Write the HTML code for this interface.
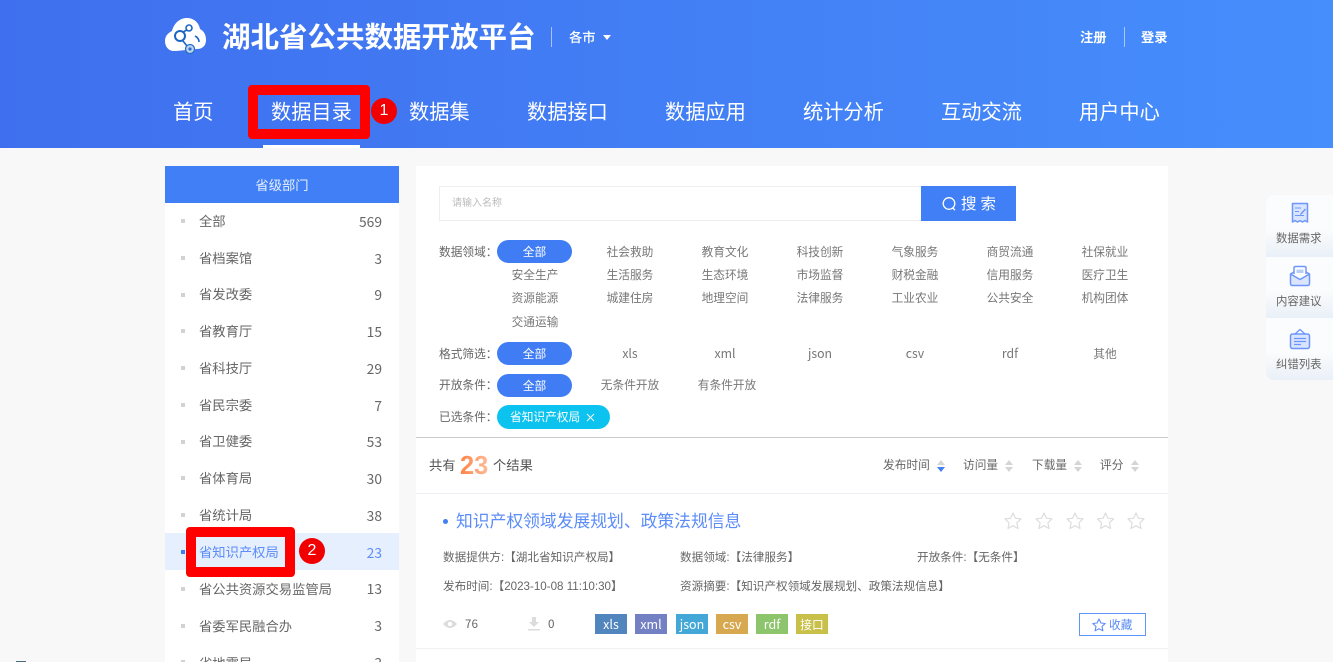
<!DOCTYPE html>
<html lang="zh">
<head>
<meta charset="utf-8">
<title>湖北省公共数据开放平台</title>
<style>
html{margin:0;padding:0;width:1333px;height:662px;overflow:hidden;background:#f8f8f8}
body{margin:0;padding:0;position:relative;width:1333px;height:662px;overflow:hidden;background:#f8f8f8;font-family:"Liberation Sans","Noto Sans CJK SC",sans-serif;color:#666}
.b{position:absolute;box-sizing:border-box}
.t{position:absolute;white-space:nowrap;line-height:20px;height:20px}
.c{position:absolute;white-space:nowrap;line-height:20px;height:20px;width:120px;text-align:center}
.n{font-family:"Noto Sans CJK SC","Liberation Sans",sans-serif}
svg{position:absolute;display:block;overflow:visible}
.nav{font-size:20.2px;color:#fff;top:103px}
.side{font-size:13.3px;color:#666;left:199px}
.num{font-size:13.8px;color:#666;right:951px;text-align:right}
.dot{position:absolute;left:181px;width:4px;height:4px;background:#d2d2d2}
.f{font-size:11.7px;color:#777}
.lb{font-size:11.7px;color:#666;left:439px}
.pill{position:absolute;left:497px;width:75px;height:23px;line-height:25px;border-radius:12px;background:#407cf3;color:#fff;text-align:center;font-size:11.7px}
.m{font-size:11.6px;color:#666}
.s{font-size:11.7px;color:#666;top:456px}
.tag{position:absolute;top:614px;width:32px;height:20px;line-height:20px;text-align:center;color:#fff;font-size:12.5px;font-family:"Noto Sans CJK SC","Liberation Sans",sans-serif}
.ar{position:absolute;width:0;height:0;border-left:4px solid transparent;border-right:4px solid transparent}
.up{border-bottom:5px solid #d5d5d5;top:460px}
.dn{border-top:5px solid #d5d5d5;top:467px}
.red{position:absolute;box-sizing:border-box;border:10px solid #fe0000;border-radius:4px}
.bd{position:absolute;width:26px;height:26px;border-radius:50%;background:#f00000;color:#fff;text-align:center;line-height:26px;font-size:16px}
.w{position:absolute;left:1266px;width:67px;background:linear-gradient(#fbfcfd,#fbfcfd 55%,#e9f0f7)}
.wl{font-size:11.4px;color:#666;left:1276px}
</style>
</head>
<body>
<div class="b" style="left:0;top:0;width:1333px;height:148px;background:linear-gradient(90deg,#3f6fee,#468efc)"></div>

<svg style="left:160px;top:10px;width:60px;height:50px" viewBox="160 10 60 50">
<path d="M174 51C168 51 165 46 165 41C165 36 168 33 172 31C174 23 180 18 187 18C194 18 199 23 200 29C204 31 206 35 206 40C206 46 202 49 197 49L176 51Z" fill="#fff"/>
<circle cx="180" cy="36" r="5" fill="none" stroke="#1c66c4" stroke-width="2"/>
<circle cx="189" cy="28" r="3" fill="none" stroke="#1c66c4" stroke-width="1.6"/>
<path d="M183 32L187 30M183 41L187 46M195 36Q199 38 199 42" fill="none" stroke="#1c66c4" stroke-width="1.6"/>
<circle cx="190" cy="49" r="4.5" fill="#bcd4f0" stroke="#2a70c8" stroke-width="1.3"/>
<circle cx="190" cy="49" r="1.6" fill="#2a70c8"/>
</svg>
<div class="t" style="left:222px;top:18px;height:40px;line-height:40px;font-size:28.5px;font-weight:bold;color:#fff">湖北省公共数据开放平台</div>
<div class="b" style="left:551px;top:27px;width:1px;height:20px;background:#a9c0f6"></div>
<div class="t" style="left:569px;top:28px;font-size:13.3px;color:#fff;font-weight:500">各市</div>
<div class="ar" style="left:603px;top:35px;border-top:5px solid #fff"></div>
<div class="t" style="left:1080px;top:28px;font-size:13.3px;color:#fff;font-weight:bold">注册</div>
<div class="b" style="left:1124px;top:27px;width:1px;height:20px;background:#a9c8fa"></div>
<div class="t" style="left:1141px;top:28px;font-size:13.3px;color:#fff;font-weight:bold">登录</div>

<div class="t nav" style="left:173px">首页</div>
<div class="t nav" style="left:271px">数据目录</div>
<div class="t nav" style="left:409px">数据集</div>
<div class="t nav" style="left:527px">数据接口</div>
<div class="t nav" style="left:665px">数据应用</div>
<div class="t nav" style="left:803px">统计分析</div>
<div class="t nav" style="left:941px">互动交流</div>
<div class="t nav" style="left:1079px">用户中心</div>
<div class="b" style="left:263px;top:145px;width:97px;height:3px;background:#fff"></div>
<div class="red" style="left:248px;top:85px;width:122px;height:54px"></div>
<div class="bd" style="left:371px;top:98px">1</div>

<!-- sidebar -->
<div class="b" style="left:165px;top:166px;width:234px;height:496px;background:#fff"></div>
<div class="b" style="left:165px;top:166px;width:234px;height:37px;background:#407ff5;color:#e8f0ff;font-size:13.3px;text-align:center;line-height:40px">省级部门</div>
<div class="b" style="left:165px;top:533px;width:234px;height:37px;background:#e6effe"></div>

<div class="dot" style="top:219px"></div><div class="t side" style="top:212px">全部</div><div class="t num n" style="top:211px">569</div>
<div class="dot" style="top:256px"></div><div class="t side" style="top:249px">省档案馆</div><div class="t num n" style="top:248px">3</div>
<div class="dot" style="top:293px"></div><div class="t side" style="top:285px">省发改委</div><div class="t num n" style="top:284px">9</div>
<div class="dot" style="top:329px"></div><div class="t side" style="top:322px">省教育厅</div><div class="t num n" style="top:321px">15</div>
<div class="dot" style="top:366px"></div><div class="t side" style="top:359px">省科技厅</div><div class="t num n" style="top:358px">29</div>
<div class="dot" style="top:403px"></div><div class="t side" style="top:396px">省民宗委</div><div class="t num n" style="top:395px">7</div>
<div class="dot" style="top:440px"></div><div class="t side" style="top:432px">省卫健委</div><div class="t num n" style="top:431px">53</div>
<div class="dot" style="top:476px"></div><div class="t side" style="top:469px">省体育局</div><div class="t num n" style="top:468px">30</div>
<div class="dot" style="top:513px"></div><div class="t side" style="top:506px">省统计局</div><div class="t num n" style="top:505px">38</div>
<div class="dot" style="top:550px;background:#407ff5"></div><div class="t side" style="top:543px;color:#5b8cf8">省知识产权局</div><div class="t num n" style="top:542px;color:#5b8cf8">23</div>
<div class="dot" style="top:587px"></div><div class="t side" style="top:580px">省公共资源交易监管局</div><div class="t num n" style="top:578px">13</div>
<div class="dot" style="top:624px"></div><div class="t side" style="top:617px">省委军民融合办</div><div class="t num n" style="top:615px">3</div>
<div class="dot" style="top:660px"></div><div class="t side" style="top:654px">省地震局</div><div class="t num n" style="top:652px">3</div>

<div class="red" style="left:186px;top:527px;width:109px;height:50px"></div>
<div class="bd" style="left:299px;top:538px">2</div>

<!-- main -->
<div class="b" style="left:416px;top:166px;width:752px;height:496px;background:#fff"></div>
<div class="b" style="left:439px;top:186px;width:482px;height:35px;border:1px solid #eeeeee;border-right:0"></div>
<div class="t" style="left:452px;top:194px;font-size:10px;color:#bbb">请输入名称</div>
<div class="b" style="left:921px;top:186px;width:95px;height:35px;background:#407ff5"></div>
<svg style="left:941px;top:196px;width:16px;height:16px" viewBox="0 0 16 16"><circle cx="8" cy="7.5" r="5.8" fill="none" stroke="#fff" stroke-width="1.3"/><path d="M11.8 12L14 14.2" stroke="#fff" stroke-width="1.3"/></svg>
<div class="t" style="left:961px;top:195px;font-size:15.5px;color:#fff;letter-spacing:4px">搜索</div>

<div class="t lb" style="top:243px">数据领域：</div>
<div class="pill" style="top:240px">全部</div>
<div class="c f" style="left:570px;top:243px">社会救助</div>
<div class="c f" style="left:665px;top:243px">教育文化</div>
<div class="c f" style="left:760px;top:243px">科技创新</div>
<div class="c f" style="left:855px;top:243px">气象服务</div>
<div class="c f" style="left:950px;top:243px">商贸流通</div>
<div class="c f" style="left:1045px;top:243px">社保就业</div>
<div class="c f" style="left:475px;top:266px">安全生产</div>
<div class="c f" style="left:570px;top:266px">生活服务</div>
<div class="c f" style="left:665px;top:266px">生态环境</div>
<div class="c f" style="left:760px;top:266px">市场监督</div>
<div class="c f" style="left:855px;top:266px">财税金融</div>
<div class="c f" style="left:950px;top:266px">信用服务</div>
<div class="c f" style="left:1045px;top:266px">医疗卫生</div>
<div class="c f" style="left:475px;top:289px">资源能源</div>
<div class="c f" style="left:570px;top:289px">城建住房</div>
<div class="c f" style="left:665px;top:289px">地理空间</div>
<div class="c f" style="left:760px;top:289px">法律服务</div>
<div class="c f" style="left:855px;top:289px">工业农业</div>
<div class="c f" style="left:950px;top:289px">公共安全</div>
<div class="c f" style="left:1045px;top:289px">机构团体</div>
<div class="c f" style="left:475px;top:313px">交通运输</div>

<div class="t lb" style="top:345px">格式筛选：</div>
<div class="pill" style="top:342px">全部</div>
<div class="c f n" style="left:570px;top:343px;font-size:12.3px">xls</div>
<div class="c f n" style="left:665px;top:343px;font-size:12.3px">xml</div>
<div class="c f n" style="left:760px;top:343px;font-size:12.3px">json</div>
<div class="c f n" style="left:855px;top:343px;font-size:12.3px">csv</div>
<div class="c f n" style="left:950px;top:343px;font-size:12.3px">rdf</div>
<div class="c f" style="left:1045px;top:345px">其他</div>

<div class="t lb" style="top:376px">开放条件：</div>
<div class="pill" style="top:374px">全部</div>
<div class="c f" style="left:570px;top:376px">无条件开放</div>
<div class="c f" style="left:667px;top:376px">有条件开放</div>

<div class="t lb" style="top:408px">已选条件：</div>
<div class="b" style="left:497px;top:405px;width:113px;height:24px;border-radius:12px;background:#0cc3ef"></div>
<div class="t" style="left:510px;top:408px;font-size:11.7px;color:#fff">省知识产权局</div>
<svg style="left:586px;top:413px;width:9px;height:9px" viewBox="0 0 9 9"><path d="M1 1L8 8M8 1L1 8" stroke="#fff" stroke-width="1"/></svg>
<div class="b" style="left:416px;top:437px;width:752px;height:1px;background:#cccccc"></div>

<div class="t" style="left:429px;top:456px;font-size:13.3px;color:#555">共有</div>
<div class="t" style="left:460px;top:451px;height:30px;line-height:30px;font-size:25.5px;font-weight:bold;background:linear-gradient(90deg,#ff8244,#ffba98);-webkit-background-clip:text;background-clip:text;color:transparent">23</div>
<div class="t" style="left:493px;top:456px;font-size:13.3px;color:#555">个结果</div>

<div class="t s" style="left:883px">发布时间</div>
<div class="ar up" style="left:937px"></div><div class="ar dn" style="left:937px;border-top-color:#407ff5"></div>
<div class="t s" style="left:963px">访问量</div>
<div class="ar up" style="left:1005px"></div><div class="ar dn" style="left:1005px"></div>
<div class="t s" style="left:1032px">下载量</div>
<div class="ar up" style="left:1074px"></div><div class="ar dn" style="left:1074px"></div>
<div class="t s" style="left:1100px">评分</div>
<div class="ar up" style="left:1131px"></div><div class="ar dn" style="left:1131px"></div>
<div class="b" style="left:416px;top:493px;width:752px;height:1px;background:#eeeef4"></div>

<div class="b" style="left:443px;top:519px;width:5px;height:5px;border-radius:50%;background:#407ff5"></div>
<div class="t" style="left:456px;top:512px;font-size:16.8px;color:#5b8cf8">知识产权领域发展规划、政策法规信息</div>
<svg style="left:1000px;top:510px;width:150px;height:22px" viewBox="1000 510 150 22">
<g fill="none" stroke="#dddddd" stroke-width="1.2" stroke-linejoin="round">
<path d="M1013 513L1015.4 518.2L1021 518.9L1016.9 522.8L1018 528.5L1013 525.7L1008 528.5L1009.1 522.8L1005 518.9L1010.6 518.2Z"/>
<path d="M1044 513L1046.4 518.2L1052 518.9L1047.9 522.8L1049 528.5L1044 525.7L1039 528.5L1040.1 522.8L1036 518.9L1041.6 518.2Z"/>
<path d="M1075 513L1077.4 518.2L1083 518.9L1078.9 522.8L1080 528.5L1075 525.7L1070 528.5L1071.1 522.8L1067 518.9L1072.6 518.2Z"/>
<path d="M1105.5 513L1107.9 518.2L1113.5 518.9L1109.4 522.8L1110.5 528.5L1105.5 525.7L1100.5 528.5L1101.6 522.8L1097.5 518.9L1103.1 518.2Z"/>
<path d="M1136 513L1138.4 518.2L1144 518.9L1139.9 522.8L1141 528.5L1136 525.7L1131 528.5L1132.1 522.8L1128 518.9L1133.6 518.2Z"/>
</g></svg>

<div class="t m" style="left:443px;top:548px">数据提供方:【湖北省知识产权局】</div>
<div class="t m" style="left:680px;top:548px">数据领域:【法律服务】</div>
<div class="t m" style="left:917px;top:548px">开放条件:【无条件】</div>
<div class="t m" style="left:443px;top:577px">发布时间:【2023-10-08 11:10:30】</div>
<div class="t m" style="left:680px;top:577px">资源摘要:【知识产权领域发展规划、政策法规信息】</div>

<svg style="left:443px;top:618px;width:14px;height:12px" viewBox="0 0 14 12"><path d="M0 6Q7 -2 14 6Q7 14 0 6Z" fill="#dcdcdc"/><circle cx="7" cy="6" r="2.2" fill="#fff"/></svg>
<div class="t n" style="left:465px;top:614px;font-size:11.7px;color:#666">76</div>
<svg style="left:528px;top:617px;width:12px;height:14px" viewBox="0 0 12 14"><path d="M4 0H8V5H11L6 10L1 5H4ZM0 12H12V13.5H0Z" fill="#dcdcdc"/></svg>
<div class="t n" style="left:548px;top:614px;font-size:11.7px;color:#666">0</div>

<div class="tag" style="left:595px;background:#5086bd">xls</div>
<div class="tag" style="left:635px;background:#7480c4">xml</div>
<div class="tag" style="left:676px;background:#43a8d8">json</div>
<div class="tag" style="left:716px;background:#d8a850">csv</div>
<div class="tag" style="left:756px;background:#8dc56c">rdf</div>
<div class="tag" style="left:796px;background:#c9c04a;font-size:11.7px;line-height:21px">接口</div>

<div class="b" style="left:1079px;top:613px;width:67px;height:23px;border:1px solid #5f96fb"></div>
<svg style="left:1092px;top:618px;width:14px;height:14px" viewBox="0 0 14 14"><path d="M7 1L8.9 5L13.2 5.5L10 8.5L10.9 12.8L7 10.7L3.1 12.8L4 8.5L.8 5.5L5.1 5Z" fill="none" stroke="#5b8cf8" stroke-width="1.1" stroke-linejoin="round"/></svg>
<div class="t" style="left:1109px;top:616px;font-size:11.7px;color:#5b8cf8">收藏</div>
<div class="b" style="left:416px;top:648px;width:752px;height:1px;background:#f1f1f1"></div>

<!-- right widgets -->
<div class="w" style="top:195px;height:62px;border-radius:8px 0 0 0"></div>
<div class="w" style="top:257px;height:61px"></div>
<div class="w" style="top:318px;height:62px;border-radius:0 0 0 8px"></div>

<svg style="left:1290px;top:202px;width:20px;height:22px" viewBox="0 0 20 22">
<path d="M2.5 1.5H17.5V20L15 18.6L12.5 20L10 18.6L7.5 20L5 18.6L2.5 20Z" fill="#d9e4fe" stroke="#6e96fa" stroke-width="1.5" stroke-linejoin="round"/>
<path d="M5 6H11M5 9.5H9M5 13.5H14" stroke="#6e96fa" stroke-width="1.1" fill="none"/>
<path d="M10 12L15 6.5L16 7.5L11 13Z" fill="#6e96fa"/>
</svg>
<div class="t wl" style="top:229px">数据需求</div>

<svg style="left:1289px;top:265px;width:22px;height:22px" viewBox="0 0 22 22">
<path d="M5 9V3Q5 1.5 6.5 1.5H15.5Q17 1.5 17 3V9" fill="#fff" stroke="#6e96fa" stroke-width="1.5"/>
<path d="M7.5 4.5H14.5V8H7.5Z" fill="#b9cdfb"/>
<path d="M1.5 9L5 7M20.5 9L17 7" stroke="#6e96fa" stroke-width="1.5"/>
<path d="M1.5 9V18.5Q1.5 20.5 3.5 20.5H18.5Q20.5 20.5 20.5 18.5V9L11 14.5Z" fill="#dbe5fd" stroke="#6e96fa" stroke-width="1.5" stroke-linejoin="round"/>
</svg>
<div class="t wl" style="top:292px">内容建议</div>

<svg style="left:1289px;top:328px;width:22px;height:22px" viewBox="0 0 22 22">
<path d="M6 6L11 1.5L16 6" fill="none" stroke="#6e96fa" stroke-width="1.3"/>
<rect x="1.5" y="6" width="19" height="14.5" rx="2" fill="#d9e4fe" stroke="#6e96fa" stroke-width="1.5"/>
<path d="M5 10.5H17M5 13.5H17M5 16.5H12" stroke="#6e96fa" stroke-width="1.2"/>
</svg>
<div class="t wl" style="top:355px">纠错列表</div>

<div class="b" style="left:16px;top:661px;width:10px;height:1px;background:#4a6a80"></div>
</body>
</html>
